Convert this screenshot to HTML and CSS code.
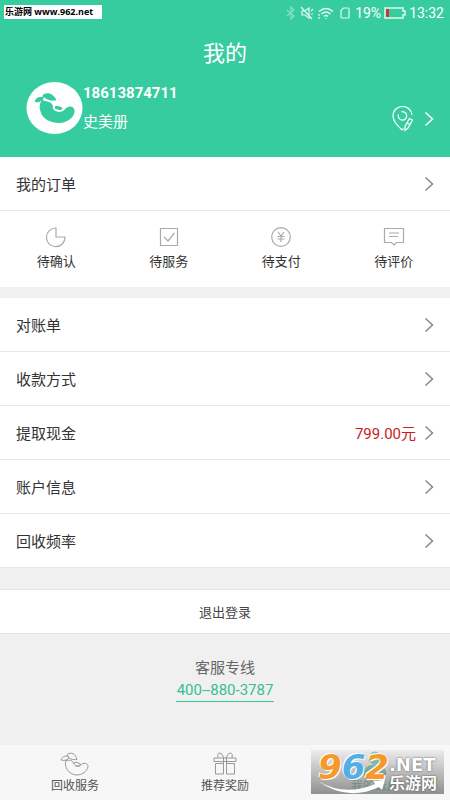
FILE: index.html
```html
<!DOCTYPE html>
<html lang="zh-CN">
<head>
<meta charset="utf-8">
<meta name="viewport" content="width=device-width, initial-scale=1">
<title>我的</title>
<link rel="stylesheet" href="styles.css">
</head>
<body>
<svg class="defs" aria-hidden="true">
  <symbol id="chevron" viewBox="0 0 10 16"><path d="M1.5 1.500 8.500 8l-7 6.500"/></symbol>
</svg>
<div class="app">
  <header class="header">
    <div class="status">
      <svg width="12" height="14" viewBox="0 0 12 14" class="faint"><path d="M2 4l7 6-3 3V1l3 3-7 6"/></svg>
      <svg width="14" height="14" viewBox="0 0 14 14"><path d="M2 5h3l4-3v10L5 9H2zM1 1l11 12M11 5l2-2M11 8h2"/></svg>
      <svg width="18" height="14" viewBox="0 0 18 14"><path d="M2 5.500q7-6 14 0M4.500 8q4.500-4 9 0M7 10.500q2-2 4 0" stroke-width="1.600"/><path d="M9 12v1M2 8v2M2 11v2"/></svg>
      <svg width="14" height="14" viewBox="0 0 14 14"><path d="M5.500 2H10q1 0 1 1v8q0 1-1 1H4q-1 0-1-1V4.500z"/></svg>
      <span>19%</span>
      <svg width="22" height="14" viewBox="0 0 22 14"><path d="M1 2h18v3h2v4h-2v3H1z" stroke-width="1.500"/><path d="M2 3h3v8H2z" class="charge"/></svg>
      <span>13:32</span>
    </div>
    <h1 class="title">我的</h1>
    <div class="profile">
      <svg class="avatar" width="57" height="54" viewBox="0 0 58 54">
        <ellipse cx="29" cy="27" rx="28.500" ry="26.500" class="white"/>
        <path class="green" d="M16 19C20 20 25 20 27 24C29 30 36 32 40 28C42 25 47 24 49 28C51 33 46 40 37 42C27 43 17 39 15 31C13 26 14 22 16 19z"/>
        <path class="green" d="M17 14C21 10 28 12 31 19C25 20 20 19 17 14zM9 21C9 17 13 15 18 16C17 20 13 22 9 21z"/>
        <path class="stem" d="M17 21q-1-4 1-7"/>
        <ellipse class="bite" cx="33" cy="27" rx="5" ry="2.800" transform="rotate(12 33 27)"/>
      </svg>
      <div class="who">
        <strong class="phone">18613874711</strong>
        <span class="name">史美册</span>
      </div>
      <a class="address" href="#address" aria-label="地址">
        <svg width="22" height="26" viewBox="0 0 22 26"><path d="M10 24C5 19 1 15 1 10a9.500 9 0 0 1 19-1M10 24l1.500-1.500M6.500 8.500a4.200 4.200 0 1 0 3-2.700M17.500 12.500l3 1.500-4.500 8-3 2.500v-4zM15 17l3 1.500"/></svg>
        <svg class="chevron light"><use href="#chevron"/></svg>
      </a>
    </div>
  </header>

  <main class="main">
    <section class="card">
      <a class="row" href="#orders"><span>我的订单</span><svg class="chevron"><use href="#chevron"/></svg></a>
      <nav class="orders">
        <a href="#confirm"><svg width="22" height="22" viewBox="0 0 22 22"><path d="M11 2v9h9a9.300 9.300 0 1 1-9-9z"/></svg>待确认</a>
        <a href="#service"><svg width="22" height="22" viewBox="0 0 22 22"><path d="M2.500 2.500h17v17h-17zM6 11l4 4 6.500-8"/></svg>待服务</a>
        <a href="#pay"><svg width="22" height="22" viewBox="0 0 22 22"><circle cx="11" cy="11" r="9.300"/><path d="M8 6l3 4 3-4M11 10v6M7.500 10.500h7M7.500 13h7"/></svg>待支付</a>
        <a href="#review"><svg width="22" height="22" viewBox="0 0 22 22"><path d="M1.500 2.500h19v14h-7L11 19l-2.500-2.500h-7zM6 7h10M6 10.500h9"/></svg>待评价</a>
      </nav>
    </section>

    <section class="card settings">
      <a class="row" href="#bill"><span>对账单</span><svg class="chevron"><use href="#chevron"/></svg></a>
      <a class="row" href="#method"><span>收款方式</span><svg class="chevron"><use href="#chevron"/></svg></a>
      <a class="row" href="#cash"><span>提取现金</span><span class="amount">799.00元</span><svg class="chevron"><use href="#chevron"/></svg></a>
      <a class="row" href="#account"><span>账户信息</span><svg class="chevron"><use href="#chevron"/></svg></a>
      <a class="row" href="#frequency"><span>回收频率</span><svg class="chevron"><use href="#chevron"/></svg></a>
    </section>

    <button class="logout" type="button">退出登录</button>

    <div class="hotline">
      <span>客服专线</span>
      <a href="tel:4008803787">400--880-3787</a>
    </div>
  </main>

  <nav class="tabs">
    <a href="#recycle">
      <svg width="30" height="26" viewBox="0 0 30 26"><path d="M6 9.500C9 9 12 9 13.500 12C15 16 19 16 21 14C23 11 28 12 28 15.500C27 21 22 24 16 24C8 23 4 16 6 9.500zM7 4C11 0 16 3 17 8.500C12 9 9 8 7 4zM1 9C2 5 7 4 9 6.500C8 9 5 10 1 9zM13.500 12q3-2 7 1-1 3-5 2"/></svg>
      回收服务
    </a>
    <a href="#rewards">
      <svg width="30" height="26" viewBox="0 0 30 26"><path d="M4 7h22v3.500H4zM5.500 12.500h8V23h-8zM16.500 12.500h8V23h-8zM13.500 7v16M16.500 7v16M8 7q-1-5 2-5 2 0 4 5M22 7q1-5-2-5-2 0-4 5"/></svg>
      推荐奖励
    </a>
    <a class="current" href="#me">
      <svg width="30" height="26" viewBox="0 0 30 26"><circle cx="15" cy="7" r="6"/><path d="M4 24q0-10 11-10t11 10z"/></svg>
      我的账户
    </a>
  </nav>

  <div class="source">乐游网 www.962.net</div>
  <div class="watermark">
    <svg class="swoosh" viewBox="0 0 133 44"><path d="M7 31Q34 47 64 34l-2-3 12-1-3 10-3-3Q36 52 7 31z"/></svg>
    <span class="digits">9<i>6</i>2</span>
    <span class="domain"><b>.NET</b><span>乐游网</span></span>
  </div>
</div>
</body>
</html>
```
FILE: styles.css
```css
* { box-sizing: border-box; }

body {
  margin: 0;
  background: #f0f0f0;
  color: #333;
  font-family: Roboto, "Noto Sans CJK SC", sans-serif;
  font-size: 15px;
}

a { color: inherit; text-decoration: none; }

svg {
  flex: none;
  fill: none;
  stroke: currentColor;
  stroke-width: 1.2;
}

.defs { position: absolute; width: 0; height: 0; }

.app {
  position: relative;
  display: flex;
  flex-direction: column;
  min-height: 100vh;
}

.header {
  padding-bottom: 20px;
  background: #37cc9f;
  color: #fff;
}

.status {
  display: flex;
  align-items: center;
  justify-content: flex-end;
  gap: 3px;
  height: 26px;
  padding-right: 6px;
  font-size: 14px;
}
.status svg { opacity: .85; }
.status .faint { opacity: .4; }
.charge { fill: #d22; stroke: none; }

.title {
  margin: 0;
  height: 53px;
  font-size: 22px;
  font-weight: 400;
  line-height: 56px;
  text-align: center;
}

.profile {
  display: flex;
  align-items: center;
  padding: 0 16px 0 26px;
}
.avatar { stroke: none; }
.avatar .white { fill: #fff; }
.avatar .green { fill: #37cc9f; }
.avatar .stem { fill: none; stroke: #37cc9f; stroke-width: 1.5; }
.avatar .bite { fill: #37cc9f; stroke: #fff; stroke-width: 2; }

.who {
  display: flex;
  flex: 1;
  flex-direction: column;
  line-height: 29px;
}
.address {
  display: flex;
  align-items: center;
  gap: 10px;
  padding-top: 22px;
}

.chevron { width: 10px; height: 16px; color: #888; stroke-width: 1.5; }
.chevron.light { color: #fff; }

.main { flex: 1; }
.card { background: #fff; }
.settings { margin: 11px 0 21px; }

.row {
  display: flex;
  align-items: center;
  height: 54px;
  padding: 0 16px;
  border-bottom: 1px solid #e8e8e8;
}
.row > :first-child { flex: 1; }
.amount { margin-right: 8px; color: #c6201f; }

.orders {
  display: grid;
  grid-template-columns: repeat(4, 1fr);
  height: 76px;
  padding-top: 15px;
  font-size: 13px;
}
.orders a {
  display: flex;
  flex-direction: column;
  align-items: center;
  gap: 4px;
  line-height: 20px;
}
.orders svg { color: #aaa; }

.logout {
  display: block;
  width: 100%;
  height: 45px;
  border: solid #e4e4e4;
  border-width: 1px 0;
  background: #fff;
  color: #444;
  font: inherit;
  font-size: 13px;
}

.hotline {
  display: flex;
  flex-direction: column;
  align-items: center;
  padding: 23px 0;
  color: #666;
  line-height: 22px;
}
.hotline a { padding: 0 1px; border-bottom: 1px solid #37cc9f; color: #37bd94; }

.tabs {
  display: grid;
  grid-template-columns: repeat(3, 1fr);
  height: 55px;
  padding-top: 6px;
  background: #f7f7f7;
  color: #555;
  font-size: 12px;
}
.tabs a {
  display: flex;
  flex-direction: column;
  align-items: center;
  line-height: 18px;
}
.tabs svg { color: #999; stroke-width: 1; }
.tabs .current, .tabs .current svg { color: #37aa88; }
.tabs .current svg { fill: #37bd94; }

.source {
  position: absolute;
  top: 5px;
  left: 4px;
  width: 98px;
  height: 14px;
  padding-left: 1px;
  background: #fff;
  color: #000;
  font-family: "Open Sans", "Noto Sans CJK SC", sans-serif;
  font-size: 9px;
  font-weight: 700;
  line-height: 14px;
  white-space: nowrap;
}

.watermark {
  position: absolute;
  right: 6px;
  bottom: 6px;
  display: flex;
  width: 133px;
  height: 44px;
  padding-left: 7px;
  background: linear-gradient(rgba(225, 225, 225, .5), rgba(110, 110, 110, .75));
  color: #fff;
  text-shadow: 0 0 2px #444;
}
.digits {
  color: #f7982b;
  font-family: "DejaVu Sans", sans-serif;
  font-size: 34px;
  font-style: italic;
  font-weight: 700;
  line-height: 34px;
  text-shadow: 1px 1px 0 #fff, -1px -1px 0 #fff;
}
.digits i { color: #54aee5; }
.domain {
  display: flex;
  flex-direction: column;
  padding-top: 5px;
  font-family: "DejaVu Sans", "Noto Sans CJK SC", sans-serif;
  font-size: 16px;
  font-weight: 700;
  line-height: 19px;
}
.domain b { font-size: 18px; }
.swoosh {
  position: absolute;
  inset: 0;
  fill: #fff;
  stroke: none;
}
```
